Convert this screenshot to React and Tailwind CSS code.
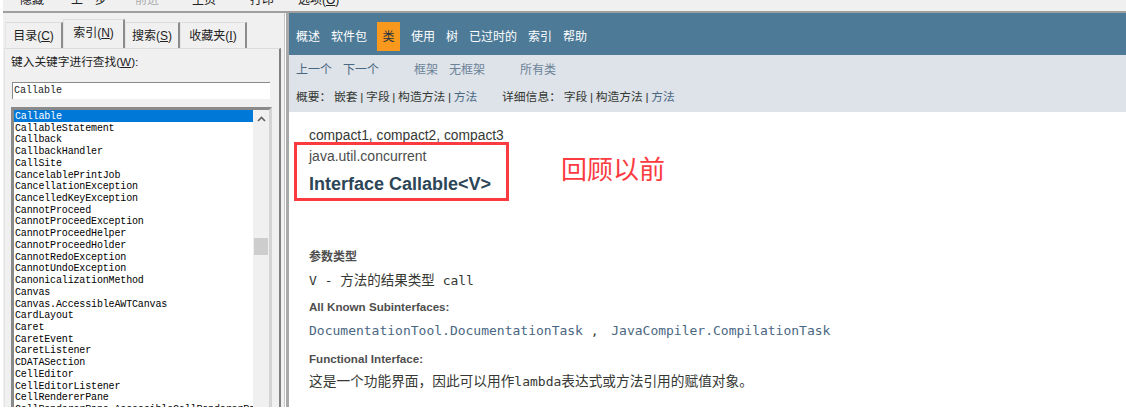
const sans = { fontFamily: '"Liberation Sans", "Noto Sans CJK SC", sans-serif' };
const mono = { fontFamily: '"Liberation Mono", monospace' };
const docMono = { fontFamily: '"DejaVu Sans Mono", "Noto Sans CJK SC", monospace' };

const entries = [
  "Callable",
  "CallableStatement",
  "Callback",
  "CallbackHandler",
  "CallSite",
  "CancelablePrintJob",
  "CancellationException",
  "CancelledKeyException",
  "CannotProceed",
  "CannotProceedException",
  "CannotProceedHelper",
  "CannotProceedHolder",
  "CannotRedoException",
  "CannotUndoException",
  "CanonicalizationMethod",
  "Canvas",
  "Canvas.AccessibleAWTCanvas",
  "CardLayout",
  "Caret",
  "CaretEvent",
  "CaretListener",
  "CDATASection",
  "CellEditor",
  "CellEditorListener",
  "CellRendererPane",
  "CellRendererPane.AccessibleCellRendererPane",
];

const tabs = [
  { label: "目录", key: "C", w: "w-[58px]" },
  { label: "索引", key: "N", w: "w-[62px]", active: true },
  { label: "搜索", key: "S", w: "w-[55px]" },
  { label: "收藏夹", key: "I", w: "w-[67px]" },
];

const toolbar = [
  { label: "隐藏", w: "w-[51px]" },
  { label: "上一步", w: "w-[64px]" },
  { label: "前进", w: "w-[57px]", muted: true },
  { label: "主页", w: "w-[58px]" },
  { label: "打印", w: "w-[48px]" },
  { label: "选项", key: "O", w: "w-[60px]" },
];

const nav = ["概述", "软件包", "类", "使用", "树", "已过时的", "索引", "帮助"];

function Sidebar() {
  return (
    <div className="w-[282px] shrink-0 flex bg-[#f0f0f0] pl-[1px] border-r border-[#c8c8c8] mr-[1px]" style={sans}>
      <div className="w-[277px] flex flex-col">
        <div className="flex h-[35px] shrink-0 items-end pl-[1px]">
          {tabs.map((t) => (
            <div
              key={t.label}
              className={`${t.w} flex items-center justify-center border-t border-l border-r-2 border-t-[#dcdcdc] border-l-[#e4e4e4] border-r-[#8c8c8c] text-[12px] text-[#222] ${
                t.active ? "h-[29px] pb-[2px]" : "h-[26px]"
              }`}
            >
              <span>
                {t.label}(<span className="underline">{t.key}</span>)
              </span>
            </div>
          ))}
        </div>
        <div className="flex-1 min-h-0 border-t border-l border-r-2 border-t-[#dcdcdc] border-l-[#e4e4e4] border-r-[#808080] pl-[7px] pt-[5px] overflow-hidden">
          <div className="-ml-[1px] text-[11.7px] leading-[16px] text-[#222]">
            键入关键字进行查找(<span className="underline">W</span>):
          </div>
          <div
            className="mt-[12px] w-[258px] h-[17px] bg-white border-t border-l border-[#8a8a8a] pl-[1px] text-[10px] leading-[15px] text-[#222]"
            style={mono}
          >
            Callable
          </div>
          <div className="mt-[8px] -ml-[1px] w-[261px] h-[320px] border-[3px] border-t-[#8a8a8a] border-l-[#8a8a8a] border-r-[#d4d4d4] border-b-[#d4d4d4] bg-white flex overflow-hidden">
            <div className="flex-1 min-w-0 overflow-hidden">
              {entries.map((e, i) => (
                <div
                  key={e}
                  className={`h-[11.73px] leading-[13px] text-[10px] tracking-[-0.15px] pl-[1px] whitespace-nowrap ${
                    i === 0 ? "bg-[#0078d7] text-white" : "text-black"
                  }`}
                  style={mono}
                >
                  {e}
                </div>
              ))}
            </div>
            <div className="w-[16px] shrink-0 bg-[#f0f0f0] flex flex-col items-center">
              <svg className="mt-[6px] mb-[116px]" width="9" height="6" viewBox="0 0 9 6" fill="none" stroke="#606060" strokeWidth="1.6">
                <path d="M1 5l3.5-3.5L8 5" />
              </svg>
              <div className="w-[14px] h-[17px] bg-[#cdcdcd]" />
            </div>
          </div>
        </div>
      </div>
    </div>
  );
}

function Doc() {
  return (
    <div className="flex-1 min-w-0 flex flex-col border-l-[3px] border-[#a9a9a9] bg-white" style={sans}>
      <div className="h-[42px] shrink-0 bg-[#4d7a97] flex items-center pl-[7px] pt-[5px] text-[12px] text-white">
        {nav.map((n) =>
          n === "类" ? (
            <span key={n} className="h-[29px] w-[23px] mr-[11px] -ml-[1px] bg-[#f8981d] text-[#253441] flex items-center justify-center">
              {n}
            </span>
          ) : (
            <span key={n} className="mr-[11px]">
              {n}
            </span>
          )
        )}
      </div>
      <div className="h-[57px] shrink-0 bg-[#dee3e9] text-[12px] text-[#4a6782] pl-[7px] pt-[1px]">
        <div className="h-[28px] flex items-center">
          <span className="w-[47px]">上一个</span>
          <span className="w-[71px]">下一个</span>
          <span className="w-[35px] text-[#6b8298]">框架</span>
          <span className="w-[71px] text-[#6b8298]">无框架</span>
          <span className="text-[#6b8298]">所有类</span>
        </div>
        <div className="h-[28px] flex items-center text-[11.8px] text-[#353833] whitespace-pre [word-spacing:-0.6px]">
          <span className="w-[206px]">
            概要： 嵌套 | 字段 | 构造方法 | <span className="text-[#4a6782]">方法</span>
          </span>
          <span>
            详细信息： 字段 | 构造方法 | <span className="text-[#4a6782]">方法</span>
          </span>
        </div>
      </div>
      <div className="flex-1 min-h-0 pl-[20px] pt-[16px] text-[#353833] overflow-hidden">
        <div className="text-[13.8px] leading-[16px] text-[#353833]">compact1, compact2, compact3</div>
        <div className="flex items-start -mt-[2px] -ml-[15px]">
          <div className="w-[215px] h-[59px] shrink-0 border-[3px] border-[#fb3b3f] pl-[12px] pt-[3px]">
            <div className="text-[14px] leading-[16px] text-[#4c4c4c]">java.util.concurrent</div>
            <div className="mt-[10px] text-[18px] leading-[20px] font-bold text-[#2c4557] whitespace-nowrap">Interface Callable&lt;V&gt;</div>
          </div>
          <div className="ml-[52px] mt-[12px] text-[26px] leading-[32px] text-[#fb3b3f]">回顾以前</div>
        </div>
        <div className="mt-[49px] text-[12px] leading-[14px] font-bold text-[#4e4e4e]">参数类型</div>
        <div className="mt-[8px] text-[13px] leading-[16px] text-[#353833] whitespace-pre" style={docMono}>
          V - <span className="text-[13.5px]">方法的结果类型</span> call
        </div>
        <div className="mt-[11px] text-[11.6px] leading-[14px] font-bold text-[#4e4e4e]">All Known Subinterfaces:</div>
        <div className="mt-[9px] text-[13px] leading-[16px] text-[#4a6782] whitespace-pre" style={docMono}>
          DocumentationTool.DocumentationTask <span className="text-[#353833]">,</span>  <span className="-ml-[3px]">JavaCompiler.CompilationTask</span>
        </div>
        <div className="mt-[13px] text-[11.6px] leading-[14px] font-bold text-[#4e4e4e]">Functional Interface:</div>
        <div className="mt-[6px] text-[13.7px] leading-[18px] text-[#353833]" style={docMono}>
          这是一个功能界面，因此可以用作<span className="text-[13px]">lambda</span>表达式或方法引用的赋值对象。
        </div>
      </div>
    </div>
  );
}

export default function App() {
  return (
    <div className="w-[1126px] h-[411px] overflow-hidden bg-white pl-[3px] pb-[4px] flex flex-col" style={{ fontFamily: '"Noto Sans CJK SC", sans-serif' }}>
      <div className="h-[13px] shrink-0 bg-[#f0f0f0] border-b-2 border-[#a0a0a0] flex items-start pl-[17px] overflow-hidden" style={sans}>
        {toolbar.map((t) => (
          <span key={t.label} className={`${t.w} shrink-0 -mt-[8px] text-[12px] leading-[16px] ${t.muted ? "text-[#aaa]" : "text-[#222]"}`}>
            {t.label}
            {t.key && (
              <>
                (<span className="underline">{t.key}</span>)
              </>
            )}
          </span>
        ))}
      </div>
      <div className="flex-1 min-h-0 flex">
        <Sidebar />
        <Doc />
      </div>
    </div>
  );
}
